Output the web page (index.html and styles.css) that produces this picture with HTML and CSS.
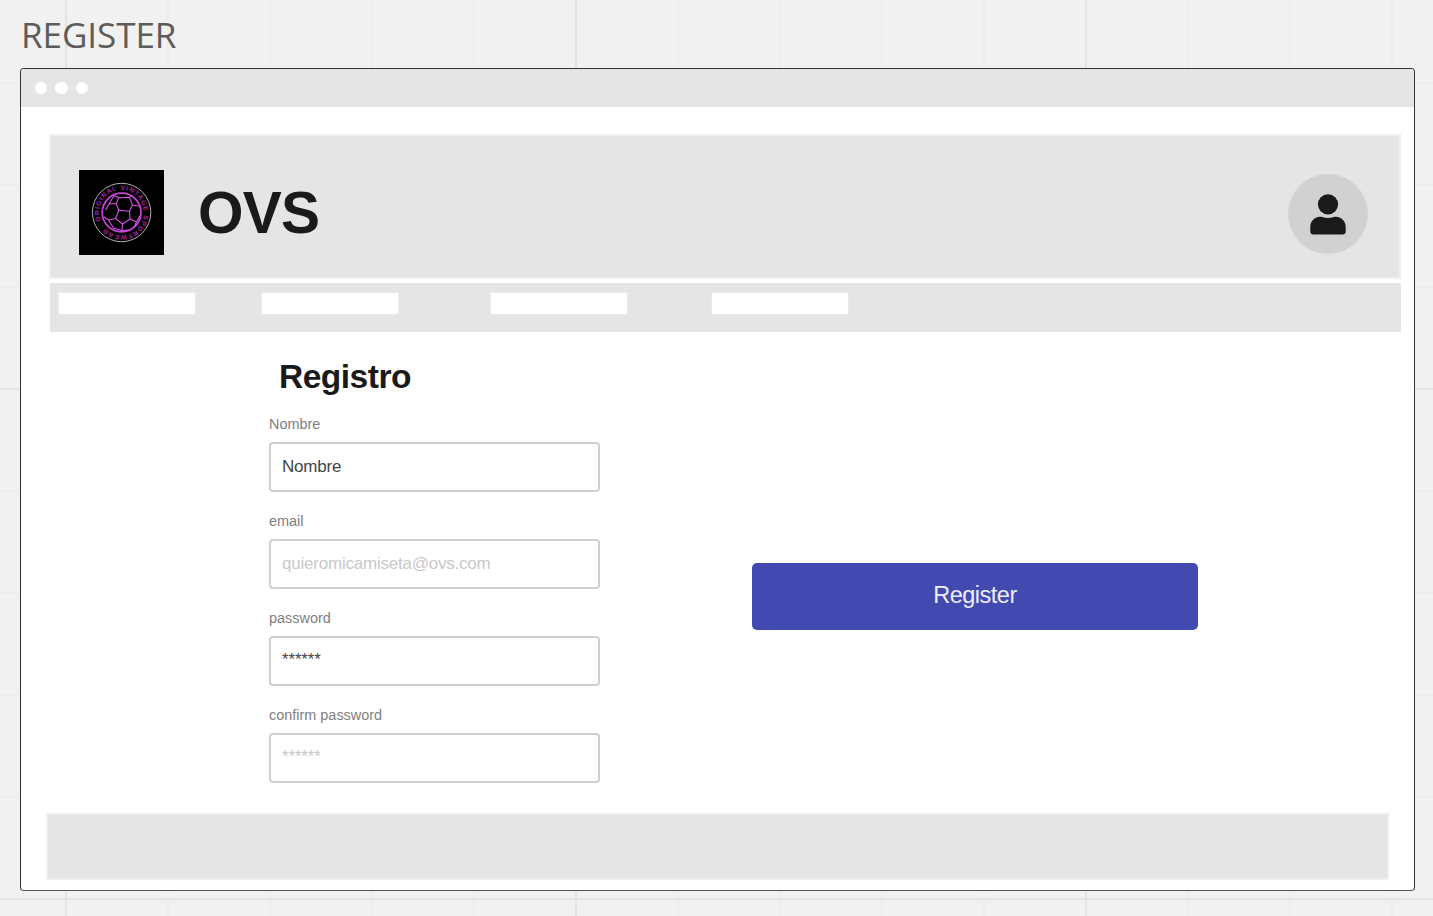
FILE: index.html
```html
<!DOCTYPE html>
<html lang="es">
<head>
<meta charset="utf-8">
<title>Register</title>
<link rel="stylesheet" href="styles.css">
</head>
<body>
<h2 class="board-title">REGISTER</h2>
<main class="window">
  <div class="titlebar"><span class="dot"></span><span class="dot"></span><span class="dot"></span></div>
  <header class="header">
    <svg class="logo" viewBox="0 0 85 85" width="85" height="85">
      <defs><path id="lettering" d="M21.92 50.81A22.2 22.2 0 1 1 63.08 34.19A22.2 22.2 0 1 1 21.92 50.81"/></defs>
      <rect width="85" height="85"/>
      <circle cx="42.6" cy="42.5" r="29.2" fill="none" stroke="#c4c4c4" stroke-width=".9"/>
      <text class="logo-text" textLength="132"><textPath href="#lettering" textLength="132">ORIGINAL VINTAGE SPORTWEAR</textPath></text>
      <g fill="none" stroke="#d850e6" stroke-width="1.1" stroke-linejoin="round">
        <circle cx="42.6" cy="42.5" r="19.4" stroke="#c843d8" stroke-width="1.7"/>
        <path d="M40 40.300L50.500 41.200L51 49L43.500 54L36.500 48.500Z"/>
        <path d="M40 40.300L37 33.500L40 27.500L50.500 27.500L53.500 35L50.500 41.200M37 33.500L30 34L26.500 40M40 27.500L35 25.500L30 34M50.500 27.500L52 25.500M53.500 35L60 36M61.500 45L57.500 52L51 49M57.500 52L55 57M43.500 54L43 60.500L51 60M43 60.500L34.500 58L29.500 50L36.500 48.500M29.500 50L25 47"/>
      </g>
    </svg>
    <h1 class="brand">OVS</h1>
    <div class="avatar">
      <svg viewBox="0 0 36 41" width="36" height="41" fill="#1a1a1a"><circle cx="18" cy="10.300" r="10.100"/><path d="M10 22.800C13 22.400 14 24 18 24S23 22.400 26 22.800C32 23 35.700 28 35.700 33V37.500Q35.700 40.500 32.700 40.500H3.300Q.3 40.500 .3 37.500V33C.3 28 4 23 10 22.800Z"/></svg>
    </div>
  </header>
  <nav class="nav"><span class="tab"></span><span class="tab"></span><span class="tab"></span><span class="tab"></span></nav>
  <form class="content">
    <section class="fields">
      <h2 class="form-title">Registro</h2>
      <div class="field"><div class="label">Nombre</div><div class="input">Nombre</div></div>
      <div class="field"><div class="label">email</div><div class="input muted">quieromicamiseta@ovs.com</div></div>
      <div class="field"><div class="label">password</div><div class="input secret">******</div></div>
      <div class="field"><div class="label">confirm password</div><div class="input secret muted">******</div></div>
    </section>
    <button class="submit" type="button">Register</button>
  </form>
  <footer class="footer"></footer>
</main>
</body>
</html>
```

FILE: styles.css
```css
* { box-sizing: border-box; }
body {
  margin: 0;
  width: 1433px;
  height: 916px;
  overflow: hidden;
  padding: 0 18px 0 20px;
  font-family: "Liberation Sans", Arial, sans-serif;
  background-color: #f1f1f1;
  background-image:
    linear-gradient(90deg, #e4e4e4 2px, transparent 2px),
    linear-gradient(#e4e4e4 2px, transparent 2px),
    linear-gradient(90deg, #ededed 2px, transparent 2px),
    linear-gradient(#ededed 2px, transparent 2px);
  background-size: 510px 510px, 510px 510px, 102px 102px, 102px 102px;
  background-position: 65px 0, 0 388px, 65px 0, 0 82px;
}
h1, h2 { margin: 0; }
.board-title {
  height: 68px;
  padding: 11px 0 0 1px;
  font: 400 35px/48px "Open Sans", sans-serif;
  letter-spacing: -.05px;
  color: #5c5c5c;
}
.window {
  width: 1395px;
  height: 823px;
  border: 1px solid #333;
  border-bottom-color: #555;
  border-radius: 4px;
  background: #fff;
  overflow: hidden;
}
.titlebar {
  display: flex;
  align-items: center;
  gap: 8.200px;
  height: 38px;
  padding-left: 14px;
  background: #e5e5e5;
}
.dot { width: 12.200px; height: 12.200px; border-radius: 50%; background: #fff; }
.header {
  display: flex;
  width: 1352px;
  height: 145px;
  margin: 27px 0 0 28px;
  padding: 34px 31px 0 28px;
  border: 2px solid #efefef;
  background: #e5e5e5;
}
.logo { flex: none; }
.logo-text { font: 700 6.600px "Liberation Sans", Arial, sans-serif; fill: #a020ae; }
.brand { margin-left: 34px; padding-top: 10px; font-size: 58.500px; line-height: 66px; letter-spacing: -.8px; color: #1a1a1a; }
.avatar {
  display: flex;
  align-items: center;
  justify-content: center;
  width: 80px;
  height: 80px;
  margin: 4px 0 0 auto;
  border-radius: 50%;
  background: #d1d1d1;
}
.nav {
  display: grid;
  grid-template-columns: 203px 229px 221px 138px;
  width: 1351px;
  height: 49px;
  margin: 4px 0 0 29px;
  padding: 9px 0 0 8px;
  background: #e5e5e5;
}
.tab { width: 138px; height: 23px; border: 1px solid #ebebeb; background: #fff; }
.content { display: flex; height: 481px; padding: 24px 0 0 248px; }
.fields { width: 331px; }
.form-title { padding-left: 10px; height: 59px; font-size: 33.500px; line-height: 42px; letter-spacing: -.5px; color: #1a1a1a; }
.field { height: 97px; }
.label { height: 27px; font-size: 14.450px; line-height: 18px; color: #808080; }
.input {
  height: 50px;
  padding-left: 11px;
  border: 2px solid #d0d0d0;
  border-radius: 4px;
  font-size: 17px;
  line-height: 45px;
  letter-spacing: -.22px;
  color: #444;
}
.secret { font-size: 16.600px; line-height: 43px; letter-spacing: 0; }
.muted { color: #c8c8c8; }
.submit {
  width: 446px;
  height: 67px;
  margin: 207px 0 0 152px;
  padding: 0 0 2px;
  border: 0;
  border-radius: 5px;
  background: #424ab1;
  color: #eeeef9;
  font: 23.500px "Liberation Sans", Arial, sans-serif;
  letter-spacing: -.5px;
}
.footer {
  width: 1343px;
  height: 67px;
  margin-left: 25px;
  border: 2px solid #efefef;
  background: #e5e5e5;
}
```
